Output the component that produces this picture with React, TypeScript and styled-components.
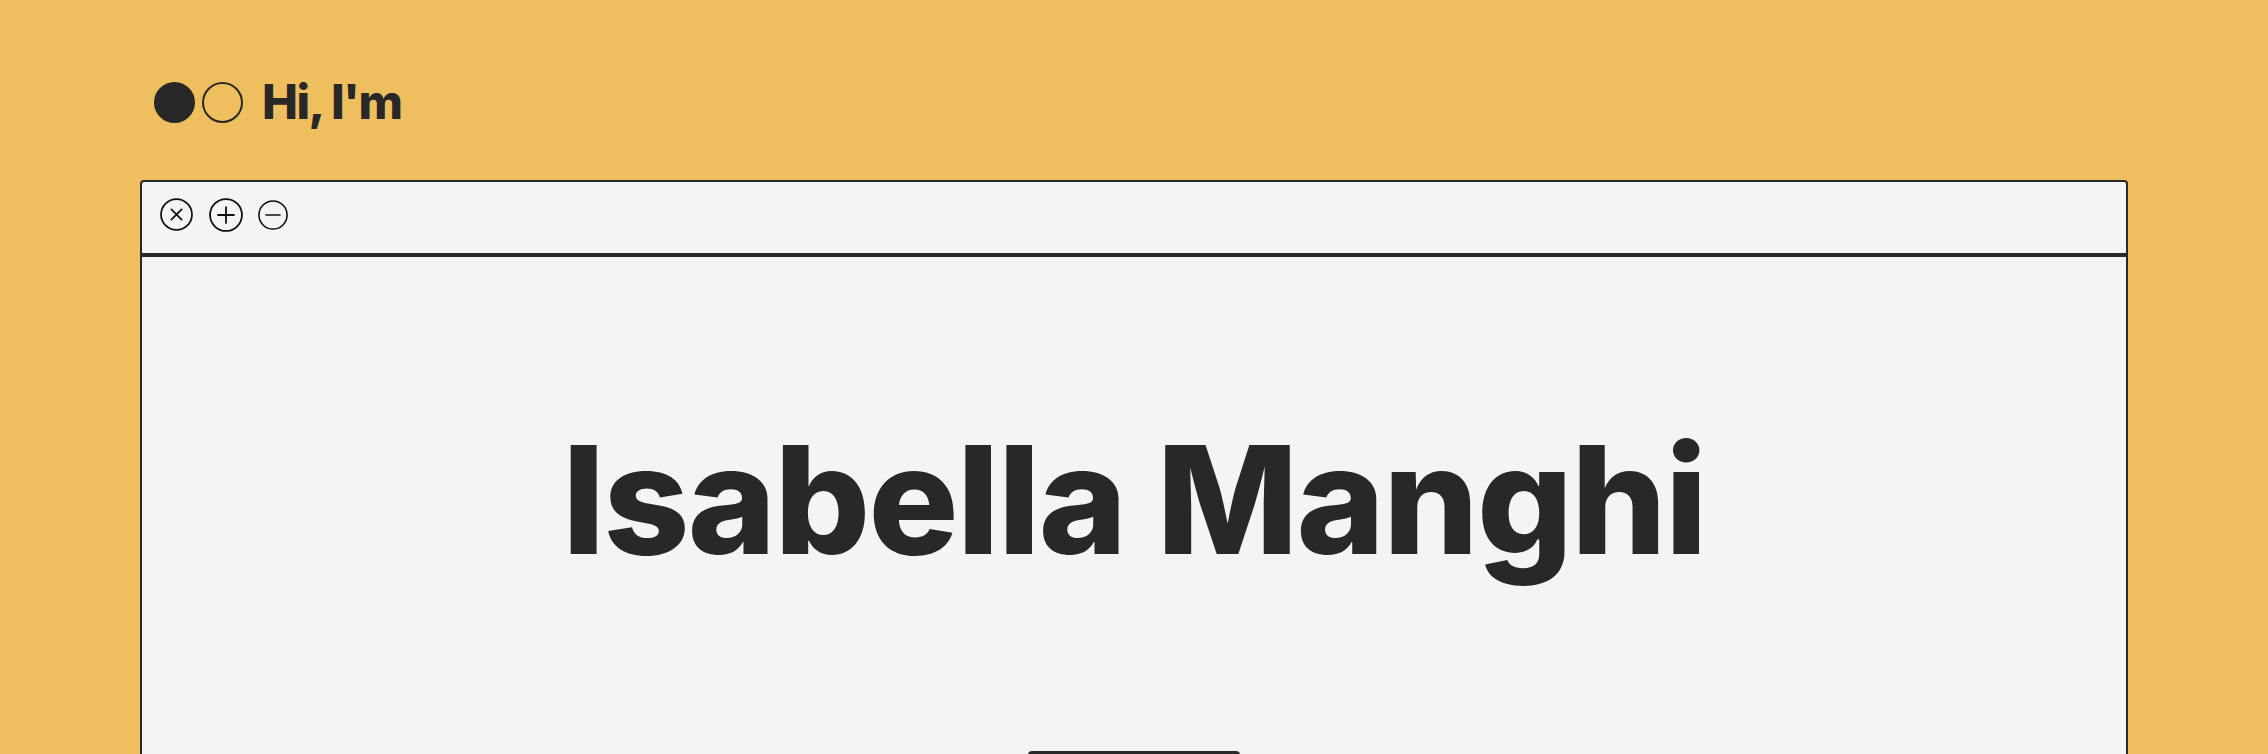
import * as React from 'react';
import styled, { createGlobalStyle } from 'styled-components';

const ink = '#282828';

const GlobalStyle = createGlobalStyle`
  html, body {
    margin: 0;
    padding: 0;
    background: #eebe5f;
    font-family: Inter, "Noto Sans", sans-serif;
    color: ${ink};
  }
`;

const Page = styled.div`
  height: 754px;
  padding: 78px 140px 0;
  box-sizing: border-box;
  overflow: hidden;
`;

const Header = styled.header`
  display: flex;
  align-items: center;
  height: 48px;
  padding-left: 14px;
`;

const Dots = styled.div`
  display: flex;
  gap: 7px;
  margin-right: 19px;
`;

const Dot = styled.span<{ $filled?: boolean }>`
  width: 41px;
  height: 41px;
  border-radius: 50%;
  box-sizing: border-box;
  background: ${(p) => (p.$filled ? ink : 'transparent')};
  border: 2px solid ${ink};
`;

const Greeting = styled.h2`
  margin: 0;
  font-size: 48px;
  line-height: 48px;
  font-weight: 800;
  letter-spacing: -1.5px;
`;

const Window = styled.section`
  margin-top: 54px;
  border: 2px solid ${ink};
  border-radius: 4px;
  background: #f4f4f4;
`;

const TitleBar = styled.div`
  display: flex;
  align-items: center;
  height: 75px;
  padding: 0 0 6px 18px;
  box-sizing: border-box;
  border-bottom: 4px solid ${ink};
`;

const IconButton = styled.button<{ $size: number; $gap?: number }>`
  width: ${(p) => p.$size}px;
  height: ${(p) => p.$size}px;
  margin-right: ${(p) => p.$gap ?? 0}px;
  padding: 0;
  border: none;
  background: none;
  display: flex;
  color: #111;
  svg {
    width: 100%;
    height: 100%;
  }
`;

const Body = styled.div`
  display: flex;
  flex-direction: column;
  align-items: center;
  padding-top: 168px;
`;

const Name = styled.h1`
  margin: 0;
  font-size: 150px;
  line-height: 150px;
  font-weight: 800;
  letter-spacing: -1.6px;
`;

const Cta = styled.button`
  margin-top: 176px;
  width: 212px;
  height: 60px;
  border: none;
  border-radius: 4px;
  background: ${ink};
`;

const CircleIcon = ({ kind }: { kind: 'close' | 'plus' | 'minus' }) => (
  <svg viewBox="0 0 32 32" fill="none" stroke="currentColor" strokeWidth="1.7" strokeLinecap="round">
    <circle cx="16" cy="16" r="15" />
    {kind === 'close' && <path d="M11 11 L21 21 M21 11 L11 21" />}
    {kind === 'plus' && <path d="M16 8.5 V23.5 M8.5 16 H23.5" />}
    {kind === 'minus' && <path d="M8.5 16 H23.5" />}
  </svg>
);

export default function App() {
  return (
    <>
      <GlobalStyle />
      <Page>
        <Header>
          <Dots>
            <Dot $filled />
            <Dot />
          </Dots>
          <Greeting>Hi, I'm</Greeting>
        </Header>
        <Window>
          <TitleBar>
            <IconButton $size={33} $gap={16} aria-label="close">
              <CircleIcon kind="close" />
            </IconButton>
            <IconButton $size={34} $gap={15} aria-label="expand">
              <CircleIcon kind="plus" />
            </IconButton>
            <IconButton $size={30} aria-label="minimize">
              <CircleIcon kind="minus" />
            </IconButton>
          </TitleBar>
          <Body>
            <Name>Isabella Manghi</Name>
            <Cta />
          </Body>
        </Window>
      </Page>
    </>
  );
}
